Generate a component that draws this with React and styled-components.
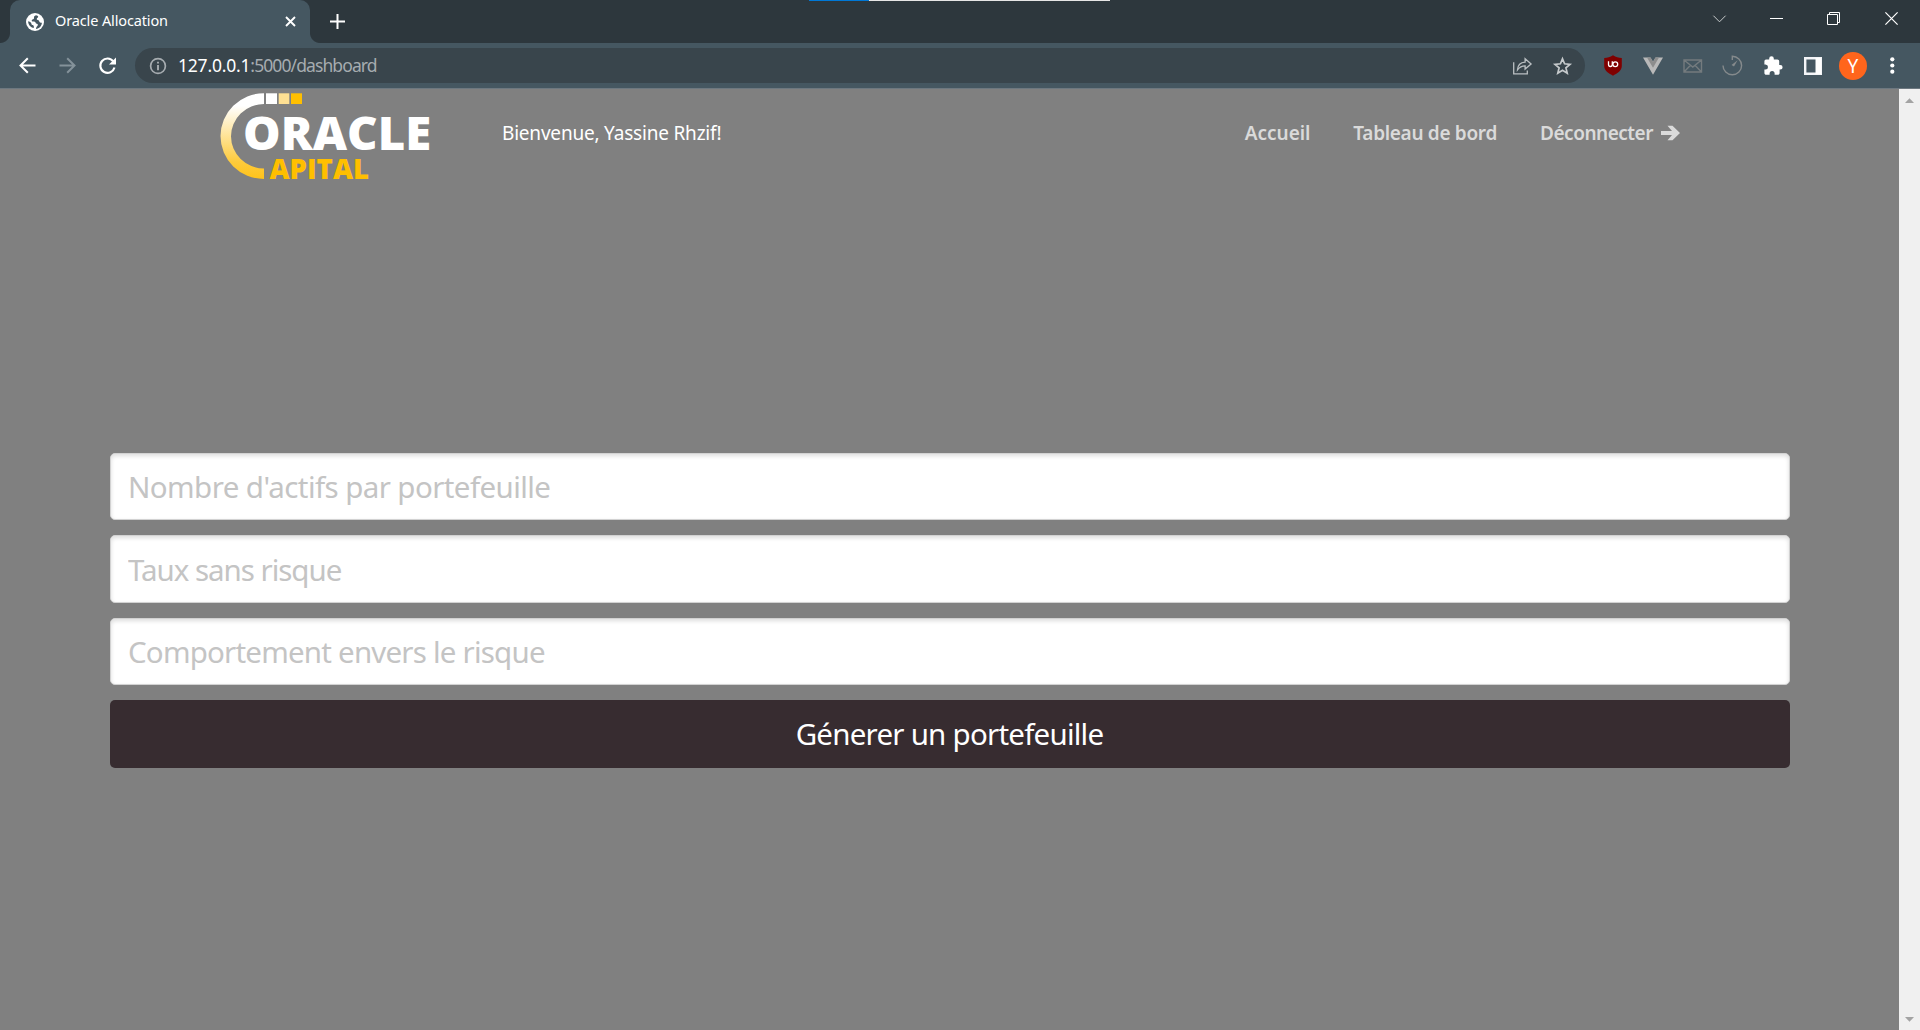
import React from "react";
import styled, { createGlobalStyle } from "styled-components";

const GlobalStyle = createGlobalStyle`
  * { box-sizing: border-box; }
  body { margin: 0; overflow: hidden; font-family: "Noto Sans", "Open Sans", sans-serif; }
`;

const Window = styled.div`
  width: 1920px;
  height: 1030px;
  display: flex;
  flex-direction: column;
  overflow: hidden;
  position: relative;
`;

const CaptureBar = styled.div`
  position: absolute;
  top: 0;
  left: 809px;
  width: 301px;
  height: 1px;
  background: linear-gradient(to right, #0078d7 60px, #e6e6e6 60px);
`;

const TabStrip = styled.div`
  height: 43px;
  flex: none;
  display: flex;
  background: #2d373d;
  padding-left: 10px;
`;

const Tab = styled.div`
  width: 300px;
  height: 43px;
  display: flex;
  align-items: center;
  padding: 0 14px 0 16px;
  background: #455761;
  border-radius: 10px 10px 0 0;
  position: relative;
  &::before, &::after {
    content: "";
    position: absolute;
    bottom: 0;
    width: 10px;
    height: 10px;
  }
  &::before {
    left: -10px;
    background: radial-gradient(circle at 0 0, #2d373d 9.5px, #455761 10.5px);
  }
  &::after {
    right: -10px;
    background: radial-gradient(circle at 100% 0, #2d373d 9.5px, #455761 10.5px);
  }
`;

const TabTitle = styled.span`
  flex: 1;
  margin: -4px 0 0 11px;
  color: #fff;
  font-size: 14.5px;
  line-height: 20px;
  letter-spacing: -0.13px;
  white-space: nowrap;
`;

const NewTab = styled.div`
  width: 55px;
  height: 43px;
  display: flex;
  align-items: center;
  justify-content: center;
`;

const WindowControls = styled.div`
  margin-left: auto;
  margin-right: 1px;
  display: flex;
  height: 37px;
`;

const ControlSlot = styled.div`
  width: 57px;
  display: flex;
  align-items: center;
  justify-content: center;
`;

const Toolbar = styled.div`
  height: 45px;
  flex: none;
  display: flex;
  align-items: center;
  background: #455761;
  padding: 0 7px;
`;

const Slot = styled.div`
  width: 40px;
  height: 45px;
  flex: none;
  display: flex;
  align-items: center;
  justify-content: center;
`;

const AddressBar = styled.div`
  width: 1450px;
  height: 35px;
  margin: 0 8px;
  display: flex;
  align-items: center;
  background: #39454c;
  border-radius: 18px;
  padding: 0 3px 0 14px;
`;

const Url = styled.span`
  flex: 1;
  margin: -2px 0 0 11px;
  color: #fff;
  font-size: 17.5px;
  line-height: 24px;
  letter-spacing: -0.2px;
  white-space: nowrap;
`;

const UrlPath = styled.span`
  color: #a6acb0;
  letter-spacing: -0.9px;
`;

const Avatar = styled.div`
  width: 28px;
  height: 28px;
  border-radius: 50%;
  background: #ff651c;
  color: #fff;
  font-size: 19px;
  line-height: 28px;
  text-align: center;
`;

const Viewport = styled.div`
  flex: 1;
  display: flex;
  background: #808080;
  border-top: 1px solid #6d7880;
`;

const Page = styled.main`
  flex: 1;
  display: flex;
  flex-direction: column;
`;

const Header = styled.header`
  height: 95px;
  display: flex;
  align-items: flex-start;
  padding: 0 219px 0 220px;
`;

const Welcome = styled.span`
  margin: 30px 0 0 70px;
  color: #fff;
  font-size: 19px;
  line-height: 28px;
  letter-spacing: -0.2px;
  white-space: nowrap;
`;

const Nav = styled.nav`
  margin: 30px 0 0 auto;
  display: flex;
  gap: 43px;
`;

const NavLink = styled.a`
  display: flex;
  align-items: center;
  gap: 8px;
  color: #dadada;
  font-size: 19px;
  font-weight: 600;
  line-height: 28px;
  letter-spacing: ${(p) => p.$track}px;
  white-space: nowrap;
`;

const Form = styled.form`
  width: 1680px;
  margin: 269px 0 0 110px;
  display: grid;
  grid-template-rows: 67px 68px 67px 68px;
  row-gap: 15px;
`;

const Field = styled.input`
  border: 1px solid #d2d2d2;
  border-radius: 5px;
  background: #fff;
  box-shadow: inset 0 2px 4px #ddd;
  padding: 0 17px;
  font-family: inherit;
  font-size: 29.5px;
  letter-spacing: ${(p) => p.$track}px;
  outline: none;
  &::placeholder { color: #c4c4c4; opacity: 1; }
`;

const Submit = styled.button`
  border: 0;
  border-radius: 5px;
  background: #372c30;
  color: #fff;
  font-family: inherit;
  font-size: 29.5px;
  letter-spacing: -0.76px;
  padding: 0 1px 2px 0;
`;

const Scrollbar = styled.div`
  width: 21px;
  background: #f0f0f0;
  display: flex;
  flex-direction: column;
  justify-content: space-between;
  align-items: center;
  padding: 9px 0 8px;
`;

const Glyph = styled.svg`
  display: block;
  flex: none;
  overflow: visible;
`;

const Icon = ({ w, h, children }) => (
  <Glyph width={w} height={h} viewBox={`0 0 ${w} ${h}`} fill="none">
    {children}
  </Glyph>
);

const Logo = () => (
  <Icon w={212} h={100}>
    <defs>
      <linearGradient id="ring" x1="0" y1="4" x2="0" y2="90" gradientUnits="userSpaceOnUse">
        <stop offset="0.15" stopColor="#fff" />
        <stop offset="0.8" stopColor="#fecb3c" />
        <stop offset="1" stopColor="#ffc21a" />
      </linearGradient>
    </defs>
    <path d="M44 4.2A43.5 42.9 0 0 0 44 90V79.4A33 32.2 0 0 1 44 15Z" fill="url(#ring)" />
    <path d="M46 4.3h11V15H46z" fill="#fff" />
    <path d="M58.7 4.3h10.6V15H58.7z" fill="#fee093" />
    <path d="M71 4.3h11V15H71z" fill="#ffbf00" />
    <text x="23" y="61" textLength="188.2" lengthAdjust="spacingAndGlyphs" fontFamily="Open Sans" fontWeight="800" fontSize="46.5" fill="#fff">ORACLE</text>
    <text x="49.5" y="90" textLength="99.5" lengthAdjust="spacingAndGlyphs" fontFamily="Open Sans" fontWeight="800" fontSize="27.5" fill="#ffbf00">APITAL</text>
  </Icon>
);

const GlobeIcon = () => (
  <Icon w={18} h={18}>
    <circle cx="9" cy="9" r="9" fill="#fff" />
    <path d="M10 2.2C8.500 2.600 7.800 3.600 8 4.600c.1.900.2 1.200-.8 1.600-1.200.4-1.700.9-1.400 1.700.3.700 1 .7 2 .6 1.300-.1 1.700.7 1.900 1.400.3 1 1.200.5 1.800 1.100.700.8.2 1.500-.4 2.200-.7.8-1 1.400-1.100 2.700 3.300-.4 5.700-3 5.900-6.200-.7-.1-1.500.1-2.200-.5-.8-.7-.3-1.500-1.300-1.900-.9-.3-1.800-.4-1.600-1.500.2-.9 1.500-1.200 1.400-2.200-.1-.7-1-1.200-2.200-1.400zM2.100 8.300c.1 3.500 2.400 6.200 5.700 6.700 0-.8.2-1.600-.2-2.200-.4-.7-1.400-.5-1.900-1.200-.5-.6-.1-1.300-.7-1.900-.6-.7-1.800-1.100-2.900-1.400z" fill="#455761" />
  </Icon>
);

const App = () => (
  <Window>
    <GlobalStyle />
    <TabStrip>
      <Tab>
        <GlobeIcon />
        <TabTitle>Oracle Allocation</TabTitle>
        <Icon w={11} h={11}>
          <path d="M1 1l9 9M10 1l-9 9" stroke="#fff" strokeWidth="1.9" />
        </Icon>
      </Tab>
      <NewTab>
        <Icon w={15} h={15}>
          <path d="M7.500 0v15M0 7.500h15" stroke="#fff" strokeWidth="2" />
        </Icon>
      </NewTab>
      <WindowControls>
        <ControlSlot>
          <Icon w={13} h={8}><path d="M.4.700L6.500 6.800 12.600.700" stroke="#c9cccd" /></Icon>
        </ControlSlot>
        <ControlSlot>
          <Icon w={13} h={1}><path d="M0 .5h13" stroke="#fff" /></Icon>
        </ControlSlot>
        <ControlSlot>
          <Icon w={13} h={13}><path d="M.5 2.500h10v10H.5zM2.500 2.500v-2h10v10h-2" stroke="#fff" /></Icon>
        </ControlSlot>
        <ControlSlot>
          <Icon w={12} h={13}><path d="M.4.400l12.200 12.200M12.600.400L.4 12.600" stroke="#fff" strokeWidth="1.200" /></Icon>
        </ControlSlot>
      </WindowControls>
    </TabStrip>
    <Toolbar>
      <Slot>
        <Icon w={17} h={17}><path d="M16.500 8.500h-15M8.800 1.200L1.500 8.500l7.300 7.300" stroke="#fff" strokeWidth="2" /></Icon>
      </Slot>
      <Slot>
        <Icon w={17} h={17}><path d="M.5 8.500h15M8.200 1.200l7.300 7.300-7.300 7.300" stroke="#84929a" strokeWidth="2" /></Icon>
      </Slot>
      <Slot>
        <Icon w={17} h={17}>
          <path d="M14.300 4.300A7.200 7.200 0 1 0 15.500 10.500" stroke="#fff" strokeWidth="2.100" />
          <path d="M17 .5v7h-7z" fill="#fff" />
        </Icon>
      </Slot>
      <AddressBar>
        <Icon w={18} h={18}>
          <circle cx="9" cy="9" r="7.400" stroke="#a6acb0" strokeWidth="1.700" />
          <path d="M9 8v5.200M9 4.700v1.900" stroke="#a6acb0" strokeWidth="1.900" />
        </Icon>
        <Url>127.0.0.1<UrlPath>:5000/dashboard</UrlPath></Url>
        <Slot>
          <Icon w={20} h={18}>
            <path d="M1.700 5.200v11.600h13.600v-3.200" stroke="#babfc2" strokeWidth="1.300" />
            <path d="M5.500 12.800C5.800 8.300 8.500 5.500 13.100 5.200V1.700l6 5.200-6 5.200V8.800C9.500 8.800 7.500 10 5.500 12.800z" stroke="#babfc2" strokeWidth="1.300" />
          </Icon>
        </Slot>
        <Slot>
          <Icon w={19} h={18}>
            <path d="M9.500 1.800l2.100 5 5.400.5-4.100 3.500 1.300 5.300-4.700-2.900-4.700 2.900 1.300-5.300L2 7.300l5.400-.5z" stroke="#c6cacc" strokeWidth="1.700" />
          </Icon>
        </Slot>
      </AddressBar>
      <Slot>
        <Icon w={19} h={21}>
          <path d="M9 .3C12 2.300 14.500 3 17.800 3.100V11c0 5-5 7.500-8.800 9.700C5.200 18.500.2 16 .2 11V3.100C3.500 3 6 2.300 9 .300z" fill="#800000" />
          <path d="M4.500 6.300v3.300a1.900 1.900 0 0 0 3.800 0V6.300" stroke="#fff" strokeWidth="1.300" />
          <circle cx="11.300" cy="9.200" r="2.400" stroke="#fff" strokeWidth="1.300" />
        </Icon>
      </Slot>
      <Slot>
        <Icon w={21} h={18}>
          <path d="M0 .5h7.500L10 4.800 12.500.5H20L10 17.700z" fill="#b9b9b9" />
          <path d="M4 .5h3.500L10 4.800 12.500.5H16L10 10.800z" fill="#8d8d8d" />
        </Icon>
      </Slot>
      <Slot>
        <Icon w={20} h={14}>
          <path d="M1 1h17.500v12H1zM1 1l8.800 7L18.500 1M1 13l6.500-6.800M18.500 13L12 6.200" stroke="#747b7e" strokeWidth="1.400" />
        </Icon>
      </Slot>
      <Slot>
        <Icon w={22} h={21}>
          <path d="M10.300 5V1.200a9.300 9.300 0 1 1-9.300 9.300" stroke="#858a8c" strokeWidth="1.400" />
          <path d="M15.600 5.300l-3.600 6.300-2.500-1.600z" fill="#858a8c" />
        </Icon>
      </Slot>
      <Slot>
        <Icon w={19} h={19}>
          <path d="M16.300 9h-1.100V5.200c0-1-.8-1.800-1.800-1.800H9.800V2.500a2.300 2.300 0 0 0-4.600 0v.9H2A1.800 1.800 0 0 0 .400 5.200v3.400h1.100a2.500 2.500 0 0 1 0 5H.4V17c0 1 .8 1.800 1.800 1.800h3.400v-1.300a2.500 2.500 0 0 1 5 0v1.300h3.200c1 0 1.800-.8 1.800-1.800v-3.400h.7a2.300 2.300 0 0 0 0-4.600z" fill="#fff" />
        </Icon>
      </Slot>
      <Slot>
        <Icon w={18} h={18}>
          <path d="M1.200 1.200h15.600v15.600H1.200z" stroke="#f4f5f8" strokeWidth="2.400" />
          <path d="M11.500 1H17v16h-5.500z" fill="#fff" />
        </Icon>
      </Slot>
      <Slot><Avatar>Y</Avatar></Slot>
      <Slot>
        <Icon w={6} h={17}>
          <circle cx="2.300" cy="2.300" r="2.100" fill="#fff" />
          <circle cx="2.300" cy="8.500" r="2.100" fill="#fff" />
          <circle cx="2.300" cy="14.700" r="2.100" fill="#fff" />
        </Icon>
      </Slot>
    </Toolbar>
    <Viewport>
      <Page>
        <Header>
          <Logo />
          <Welcome>Bienvenue, Yassine Rhzif!</Welcome>
          <Nav>
            <NavLink $track={-0.05}>Accueil</NavLink>
            <NavLink $track={-0.31}>Tableau de bord</NavLink>
            <NavLink $track={-0.48}>
              Déconnecter
              <Icon w={19} h={16}>
                <path d="M0 5.900h11L6.500.800h5L19 8l-7.500 7.200h-5l4.500-5.100H0z" fill="#dadada" />
              </Icon>
            </NavLink>
          </Nav>
        </Header>
        <Form>
          <Field $track={-0.58} placeholder="Nombre d'actifs par portefeuille" />
          <Field $track={-1.03} placeholder="Taux sans risque" />
          <Field $track={-0.79} placeholder="Comportement envers le risque" />
          <Submit type="button">Génerer un portefeuille</Submit>
        </Form>
      </Page>
      <Scrollbar>
        <Icon w={9} h={5}><path d="M0 5L4.500.200 9 5z" fill="#a3a3a3" /></Icon>
        <Icon w={9} h={5}><path d="M0 0l4.500 4.800L9 0z" fill="#a3a3a3" /></Icon>
      </Scrollbar>
    </Viewport>
    <CaptureBar />
  </Window>
);

export default App;
